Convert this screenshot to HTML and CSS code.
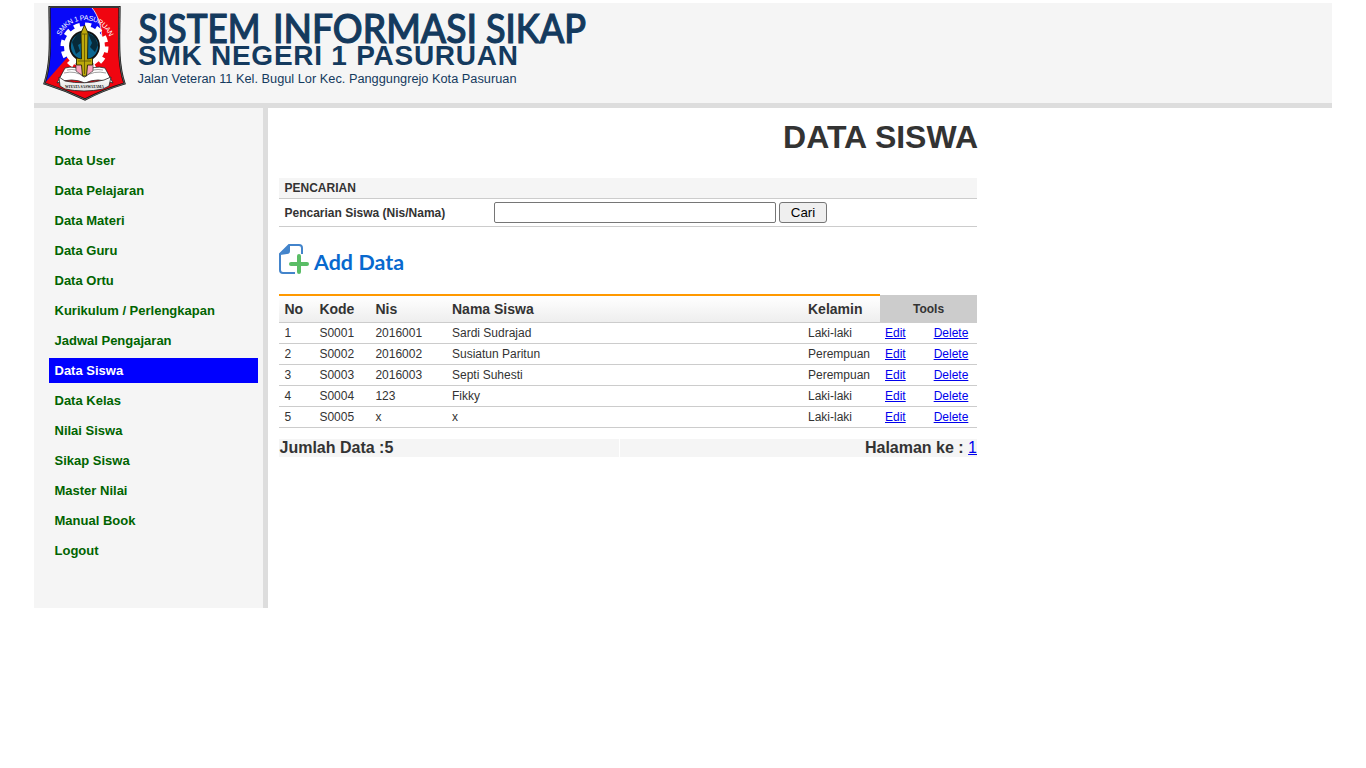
FILE: index.html
```html
<!DOCTYPE html>
<html lang="id">
<head>
<meta charset="utf-8">
<title>Sistem Informasi Sikap</title>
<link rel="stylesheet" href="styles.css">
</head>
<body>
<div class="page">
  <header class="banner">
    <svg class="banner-art" width="600" height="100" viewBox="34 3 600 100">
      <defs>
        <linearGradient id="ribbon" x1="0" x2="0" y1="0" y2="1"><stop offset="0" stop-color="#fff"/><stop offset="1" stop-color="#ddd"/></linearGradient>
        <clipPath id="shield"><path d="M50 7H119C119 36 117 62 124 84Q103 90 85 99Q65 90 45 83C52 60 50 36 50 7Z"/></clipPath>
        <path id="arc" d="M60.500 36A26.500 26.500 0 0 1 109.500 37"/>
      </defs>
      <g clip-path="url(#shield)">
        <path fill="#f00510" d="M40 3h90v100H40z"/>
        <path fill="#0808f8" d="M40 3H88C97 11 101 24 102 38L72 52L44 84Z"/>
        <path fill="none" stroke="#fff" stroke-width=".8" d="M88 4C97 11 101 24 102 38"/>
      </g>
      <path fill="none" stroke="#111" stroke-width="2.200" d="M49.500 7H119.500C119.500 36 117 62 124.500 83.500Q103 90 85 99.500Q65 90 44.500 83.500C52 60 49.500 36 49.500 7Z"/>
      <path fill="none" stroke="#aaa" stroke-width=".5" d="M49.500 7H119.500C119.500 36 117 62 124.500 83.500Q103 90 85 99.500Q65 90 44.500 83.500C52 60 49.500 36 49.500 7Z"/>
      <circle cx="84.500" cy="46.500" r="21.500" fill="none" stroke="#fff" stroke-width="5" stroke-dasharray="6 5.250"/>
      <circle cx="84.500" cy="46.500" r="17.500" fill="none" stroke="#fff" stroke-width="6"/>
      <circle cx="84.500" cy="46" r="14.500" fill="#0b6690" stroke="#111" stroke-width="1.800"/>
      <path fill="#072a39" d="M72 42l5-8 7-2-3 5 2 5-5 3 2 6-4 3zM88 33l7 4 3 8-3 7-5-5 2-4z"/>
      <path fill="#fff" stroke="#222" stroke-width=".8" d="M65 68Q75 65 84 72Q94 65 105 68L113 83Q97 77 85 83Q72 77 57 83Z"/>
      <path fill="none" stroke="#777" stroke-width=".7" d="M67 70Q77 68 84 74Q93 68 103 70M64 73Q76 70 84 77Q94 70 106 73"/>
      <path fill="#f9a5bd" stroke="#222" stroke-width=".6" d="M76 63h17v8l-8.500 6-8.500-6z"/>
      <path fill="#bca80b" stroke="#242400" stroke-width=".9" d="M84.500 25l3.500 8-.5 26 5-1v7h-5l-1 11h-4l-1-11h-5v-7l5 1-.5-26z"/>
      <path fill="none" stroke="#594f08" stroke-width=".8" d="M82 34h5M84.500 34v40M78 61h13"/>
      <path fill="url(#ribbon)" stroke="#222" stroke-width=".8" d="M59 77L65 81Q84 85 104 80L111 77L109 86L103 89Q84 93 65 89L60 86Z"/>
      <text class="crest-name"><textPath href="#arc" textLength="62">SMKN 1 PASURUAN</textPath></text>
      <text class="crest-motto" x="65" y="88" textLength="39" lengthAdjust="spacingAndGlyphs">WIYATA SASWATAMA</text>
      <text class="brand" x="138.500" y="43" textLength="122" lengthAdjust="spacingAndGlyphs">SISTEM</text>
      <text class="brand" x="273" y="43" textLength="204" lengthAdjust="spacingAndGlyphs">INFORMASI</text>
      <text class="brand" x="486" y="43" textLength="100" lengthAdjust="spacingAndGlyphs">SIKAP</text>
      <text class="school" x="138" y="65" textLength="380" lengthAdjust="spacing">SMK NEGERI 1 PASURUAN</text>
      <text class="address" x="137.500" y="83" textLength="379" lengthAdjust="spacingAndGlyphs">Jalan Veteran 11 Kel. Bugul Lor Kec. Panggungrejo Kota Pasuruan</text>
    </svg>
  </header>
  <div class="body">
    <nav class="menu">
      <a>Home</a><a>Data User</a><a>Data Pelajaran</a><a>Data Materi</a><a>Data Guru</a><a>Data Ortu</a><a>Kurikulum / Perlengkapan</a><a>Jadwal Pengajaran</a><a class="active">Data Siswa</a><a>Data Kelas</a><a>Nilai Siswa</a><a>Sikap Siswa</a><a>Master Nilai</a><a>Manual Book</a><a>Logout</a>
    </nav>
    <main class="content">
      <h1>DATA SISWA</h1>
      <form class="search">
        <div class="search-title">PENCARIAN</div>
        <div class="search-row"><label for="q">Pencarian Siswa (Nis/Nama)</label><input id="q" type="text"><button type="button">Cari</button></div>
      </form>
      <a class="add">
        <svg width="130" height="32" viewBox="0 0 130 32">
          <path fill="none" stroke="#4384cb" stroke-width="2" d="M16 29H4Q1 29 1 26V10L10 1H20Q23 1 23 4V10"/>
          <path fill="#4384cb" d="M1 11L11 0V7Q11 10 8 10Z"/>
          <path fill="none" stroke="#5abd66" stroke-width="4" stroke-linecap="round" d="M20 12V28M12 20H28"/>
          <text class="add-label" x="35" y="26" textLength="39" lengthAdjust="spacingAndGlyphs">Add</text>
          <text class="add-label" x="79.500" y="26" textLength="45.500" lengthAdjust="spacingAndGlyphs">Data</text>
        </svg>
      </a>
      <table class="data">
        <colgroup><col class="c-no"><col class="c-kode"><col class="c-nis"><col class="c-nama"><col class="c-kel"><col class="c-edit"><col class="c-del"></colgroup>
        <thead><tr><th>No</th><th>Kode</th><th>Nis</th><th>Nama Siswa</th><th>Kelamin</th><th class="tools" colspan="2">Tools</th></tr></thead>
        <tbody>
          <tr><td>1</td><td>S0001</td><td>2016001</td><td>Sardi Sudrajad</td><td>Laki-laki</td><td class="edit"><a href="#">Edit</a></td><td class="del"><a href="#">Delete</a></td></tr>
          <tr><td>2</td><td>S0002</td><td>2016002</td><td>Susiatun Paritun</td><td>Perempuan</td><td class="edit"><a href="#">Edit</a></td><td class="del"><a href="#">Delete</a></td></tr>
          <tr><td>3</td><td>S0003</td><td>2016003</td><td>Septi Suhesti</td><td>Perempuan</td><td class="edit"><a href="#">Edit</a></td><td class="del"><a href="#">Delete</a></td></tr>
          <tr><td>4</td><td>S0004</td><td>123</td><td>Fikky</td><td>Laki-laki</td><td class="edit"><a href="#">Edit</a></td><td class="del"><a href="#">Delete</a></td></tr>
          <tr><td>5</td><td>S0005</td><td>x</td><td>x</td><td>Laki-laki</td><td class="edit"><a href="#">Edit</a></td><td class="del"><a href="#">Delete</a></td></tr>
        </tbody>
      </table>
      <div class="summary"><div><b>Jumlah Data :5</b></div><div class="pager"><b>Halaman ke :</b> <a href="#">1</a></div></div>
    </main>
  </div>
</div>
</body>
</html>
```
FILE: styles.css
```css
* { box-sizing: border-box; }
body { margin: 0; background: #fff; color: #333; font: 12px "Liberation Sans", Arial, sans-serif; }
.page { width: 1298px; margin: 3px auto 0; }
.banner { height: 105px; background: #f5f5f5; border-bottom: 5px solid #ddd; }
.banner-art { display: block; }
.brand { font: 500 40px Lato, sans-serif; fill: #143a5e; stroke: #143a5e; stroke-width: 1.2px; }
.school { font: bold 28px "Liberation Sans", sans-serif; fill: #143a5e; }
.address { font: 12.5px "Liberation Sans", sans-serif; fill: #143a5e; }
.crest-name { font: 7px "Liberation Sans", sans-serif; fill: #fff; }
.crest-motto { font: bold 4.5px "Liberation Serif", serif; fill: #111; }
.body { display: flex; height: 500px; }
.menu { display: flex; flex-direction: column; gap: 5px; width: 234px; padding: 10px 5px 0 15px; background: #f5f5f5; border-right: 5px solid #ddd; }
.menu a { height: 25px; padding-left: 5.500px; font-size: 13px; font-weight: bold; line-height: 25px; color: #006400; }
.menu .active { background: #00f; color: #fff; }
.content { width: 709px; padding-left: 11px; }
h1 { margin: 9px -1px 0 0; height: 61px; font-size: 32px; line-height: 40px; text-align: right; }
.search { font-weight: bold; }
.search-title { height: 21px; padding-left: 5.5px; line-height: 20px; background: #f5f5f5; border-bottom: 1px solid #ccc; }
.search-row { display: flex; align-items: center; height: 28px; padding-left: 5.5px; border-bottom: 1px solid #ccc; }
.search-row label { width: 209.5px; }
.search-row input { width: 282px; height: 21px; margin-right: 3px; padding: 1px 2px; background: #fff; border: 1px solid #767676; border-radius: 2px; }
.search-row button { width: 48px; height: 21px; padding: 0; font: 13.333px "Liberation Sans", sans-serif; color: #000; background: #efefef; border: 1px solid #767676; border-radius: 3px; }
.add { display: block; height: 50px; margin-top: 17px; }
.add svg { display: block; }
.add-label { font: bold 20px Lato, sans-serif; fill: #0869ce; }
.data { width: 698px; table-layout: fixed; border-collapse: separate; border-spacing: 0; }
.c-no { width: 35px; } .c-kode { width: 56px; } .c-nis { width: 76px; } .c-nama { width: 356px; } .c-kel { width: 78px; } .c-edit { width: 45px; } .c-del { width: 52px; }
.data th, .data td { padding: 0 0 0 6px; text-align: left; white-space: nowrap; border-bottom: 1px solid #ccc; }
.data th:nth-child(-n+3), .data td:nth-child(-n+3) { padding-left: 5.4px; }
.data th { height: 29px; font-size: 14px; background: linear-gradient(#fff, #eee); border-top: 2px solid #f90; }
.data .tools { padding: 0; font-size: 12px; text-align: center; background: #ccc; border-top: 1px solid #fff; }
.data td { height: 21px; }
.data .edit { padding-left: 5px; }
.data .del { padding: 0; text-align: center; }
a[href] { color: #00e; text-decoration: underline; }
.summary { display: flex; gap: 1px; height: 18px; margin-top: 11px; font-size: 16px; line-height: 18px; }
.summary div { width: 340px; padding-left: .5px; background: #f5f5f5; white-space: nowrap; }
.summary .pager { width: 357px; text-align: right; }
```
